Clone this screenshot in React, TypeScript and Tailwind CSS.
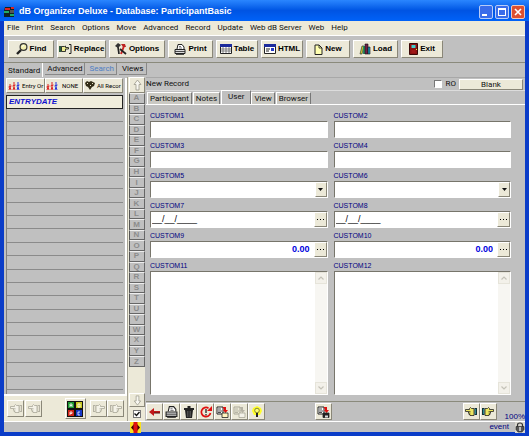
import React from "react";

const raised =
  "border border-t-white border-l-white border-r-[#8a8778] border-b-[#8a8778] bg-[#ece9d8]";
const sunken =
  "border border-t-[#77756b] border-l-[#77756b] border-r-white border-b-white bg-white";

type IconProps = { className?: string };

const AppIcon = () => (
  <svg viewBox="0 0 11 12" className="w-[11px] h-3">
    <path d="M1 1h9v10H0V5z" fill="#122" />
    <path d="M1 2h5v2H1zM7 1h3v2H7z" fill="#d22" />
    <path d="M0 5h5v2H0zM6 8h4v2H6z" fill="#2a6" />
    <path d="M6 4h4v3H6z" fill="#555" />
  </svg>
);

const FindIcon = () => (
  <svg viewBox="0 0 12 12" className="w-3 h-3">
    <path d="M1 11 5 7" stroke="#222" strokeWidth="2.400" />
    <circle cx="7.5" cy="4" r="3.4" fill="#f3efb0" stroke="#333" strokeWidth="1.200" />
    <path d="M6 3.500q1-1 2-1" stroke="#fff" fill="none" />
  </svg>
);

const ReplaceIcon = () => (
  <svg viewBox="0 0 13 10" className="w-[13px] h-[10px]">
    <path d="M0 2h2.500v6H0z" fill="#2c5c40" />
    <path d="M2.500 2.500h3l1-.5v1.500h3V5h-3v2.500h-4z" fill="#eeee90" stroke="#222" strokeWidth=".9" />
    <path d="M10 .5h2v9h-2" fill="none" stroke="#222" />
  </svg>
);

const OptionsIcon = () => (
  <svg viewBox="0 0 12 12" className="w-3 h-3">
    <path d="M3 4l1 7" stroke="#222" strokeWidth="1.700" />
    <path d="M0 3l3-3 3 2-3 3z" fill="#333" />
    <path d="M9 3 6 11" stroke="#c22" strokeWidth="2" />
    <path d="M6 1h4l1 3H8z" fill="#b22" />
    <path d="M5 6l6 5" stroke="#222" strokeWidth="1.700" />
  </svg>
);

const PrintIcon = ({ className = "w-3 h-[11px]" }: IconProps) => (
  <svg viewBox="0 0 12 11" className={className}>
    <path d="M3 5 4 .5h4L10 3v2" fill="#fff" stroke="#222" />
    <path d="M5 2.500h2M5 4h3" stroke="#444" strokeWidth=".7" />
    <path d="M1 5.500h10v4H1z" fill="#ddd" stroke="#222" />
    <path d="M1 7.500h10M2 10.500h8" stroke="#222" strokeWidth=".8" />
  </svg>
);

const TableIcon = () => (
  <svg viewBox="0 0 12 10" className="w-3 h-[10px]">
    <path d="M.5.5h11v9H.5z" fill="#fff" stroke="#222" />
    <path d="M0 0h12v3H0z" fill="#1c2b9c" />
    <path d="M1 5h10M1 7h10M3 3v6M6 3v6M9 3v6" stroke="#555" strokeWidth=".7" />
  </svg>
);

const HtmlIcon = () => (
  <svg viewBox="0 0 12 10" className="w-3 h-[10px]">
    <path d="M.5.5h11v9H.5z" fill="#fff" stroke="#222" />
    <path d="M0 0h12v3H0z" fill="#1c2b9c" />
    <path d="M2 5h4M2 7h3" stroke="#222" />
    <path d="M7 4h3v3H7z" fill="#2438c8" />
  </svg>
);

const NewIcon = () => (
  <svg viewBox="0 0 9 11" className="w-[9px] h-[11px]">
    <path d="M1 1h4l3 3v6.500H1z" fill="#ffffb0" stroke="#222" />
    <path d="M5 1v3h3" fill="none" stroke="#222" strokeWidth=".8" />
  </svg>
);

const LoadIcon = () => (
  <svg viewBox="0 0 12 12" className="w-3 h-3">
    <path d="M1 11 3 3h2L3 11z" fill="#cc3" stroke="#222" strokeWidth=".6" />
    <path d="M4 3h2v8H4z" fill="#2a8a60" />
    <path d="M6 1h3v10H6z" fill="#712048" stroke="#111" strokeWidth=".6" />
    <path d="M9 4h2v7H9z" fill="#18a0c0" stroke="#111" strokeWidth=".6" />
  </svg>
);

const ExitIcon = () => (
  <svg viewBox="0 0 9 12" className="w-[9px] h-3">
    <path d="M.5.5h8v11h-8z" fill="#8c1212" stroke="#3a0808" />
    <path d="M2.500 2h4v3h-4z" fill="#4cc" />
    <path d="M2.500 7h4v3h-4z" fill="#a01818" />
    <path d="M7 6h1v1H7z" fill="#ee4" />
  </svg>
);

const PeopleIcon = () => (
  <svg viewBox="0 0 12 8" className="w-3 h-2 shrink-0">
    <g strokeWidth="1" fill="none">
      <path d="M2 3v2L1 8M2 5l1 3M.5 5l3-1" stroke="#d22" />
      <path d="M6 1v4L5 8M6 5l1 3M4.500 4l3-1" stroke="#d22" />
      <path d="M10 1v4L9 8M10 5l1 3M8.500 4l3-1" stroke="#23d" />
    </g>
    <path d="M1.500 2h1v1h-1zM5.500 0h1v1h-1z" fill="#d22" />
    <path d="M9.500 0h1v1h-1z" fill="#23d" />
  </svg>
);

const CrowdIcon = () => (
  <svg viewBox="0 0 10 9" className="w-[10px] h-[9px] shrink-0">
    <path d="M0 2l2-2 2 1 2-1 2 1 2 1-1 3-2 1-2 3-2-3-2-1z" fill="#332c18" />
    <path d="M2 2h1v1H2zM7 2h1v1H7zM5 4h1v1H5z" fill="#e8e4c8" />
  </svg>
);

const HandIcon = ({ left, color }: { left?: boolean; color?: boolean }) => (
  <svg viewBox="0 0 12 9" className={left ? "w-3 h-[9px] -scale-x-100" : "w-3 h-[9px]"}>
    <path
      d="M3 1.500h2.500l1-1 1 1v1h4v2H8.500v1.500H8v1.500H7v1H3z"
      fill={color ? "#ece660" : "#f4f2e8"}
      stroke={color ? "#222" : "#aaa798"}
      strokeWidth=".8"
    />
    <path d="M6.500 4.500h2M6.500 6H8" stroke={color ? "#222" : "#aaa798"} strokeWidth=".6" />
    <path d="M0 1h2.500v7H0z" fill={color ? "#123038" : "#b5b2a4"} />
    <path d="M1 2h1v5H1z" fill={color ? "#2a8a90" : "#e4e1d2"} />
  </svg>
);

const BlocksIcon = () => (
  <svg viewBox="0 0 16 16" className="w-4 h-4">
    <path d="M0 0h16v16H0z" fill="#111" />
    <path d="M1 1h6v6H1z" fill="#1b9a30" />
    <path d="M9 1h6v6H9z" fill="#c8c820" />
    <path d="M1 9h6v6H1z" fill="#d02418" />
    <path d="M9 9h6v6H9z" fill="#1838c8" />
    <path d="M3 6V3h2v3M3 4.500h2M11 3h2v3h-2zM3 14v-3h2v1.500H3M13 11h-2v3h2" fill="none" stroke="#fff" strokeWidth=".8" />
  </svg>
);

const ArrowIcon = ({ down }: { down?: boolean }) => (
  <svg viewBox="0 0 9 12" className={down ? "w-[9px] h-[11px] rotate-180" : "w-[9px] h-3"}>
    <path d="M4.500 1 8 5.500H6V11H3V5.500H1z" fill="#f8f7f0" stroke="#9a988c" strokeWidth=".8" />
  </svg>
);

const BackIcon = () => (
  <svg viewBox="0 0 12 8" className="w-3 h-2">
    <path d="M0 4 5 0v3h6v2H5v3z" fill="#c01818" />
    <path d="M5 5h6" stroke="#501010" />
  </svg>
);

const TrashIcon = () => (
  <svg viewBox="0 0 10 12" className="w-[10px] h-3">
    <path d="M0 2h10v2H0zM3.500 0h3v2h-3zM1 4h8l-1 8H2z" fill="#222" />
    <path d="M3.500 5v6M5 5v6M6.500 5v6" stroke="#777" strokeWidth=".5" />
  </svg>
);

const UndoIcon = () => (
  <svg viewBox="0 0 12 12" className="w-3 h-3">
    <path d="M8.500 2.200a4.600 4.600 0 1 0 2 4.800" fill="none" stroke="#e01010" strokeWidth="1.700" />
    <path d="M7 5h5V0z" fill="#e01010" />
    <path d="M6 3v4M6 8v1.500" stroke="#222" strokeWidth="1.300" />
  </svg>
);

const CopyIcon = ({ off, disk }: { off?: boolean; disk?: boolean }) => {
  const ink = off ? "#aaa798" : "#222";
  return (
    <svg viewBox="0 0 13 12" className="w-[13px] h-3">
      <path d="M1 1h6v7H1z" fill={off ? "#ece9d8" : "#fff"} stroke={ink} />
      <path d="M2 3h3M2 5h4M2 6.500h3" stroke={ink} strokeWidth=".8" />
      <path d="M7 1h3v3h2L9.500 7 7 4h1V2.500H7z" fill={off ? "#b5b2a4" : "#e01010"} />
      <path d="M6 7h6v4.500H6z" fill={disk ? "#222" : off ? "#f4f2e8" : "#fff4c0"} stroke={ink} strokeWidth=".8" />
      {disk && <path d="M8 9.500h3v2H8z" fill="#ddd" />}
    </svg>
  );
};

const BulbIcon = () => (
  <svg viewBox="0 0 10 12" className="w-[10px] h-3">
    <path d="M5 0l4 2 1 3-2 4H2L0 5l1-3z" fill="#ffff28" />
    <circle cx="5" cy="4.500" r="2.300" fill="#ffff70" stroke="#663" strokeWidth=".8" />
    <path d="M4 7h2v4H4z" fill="#222" />
  </svg>
);

const SplitIcon = () => (
  <svg viewBox="0 0 11 11" className="w-[11px] h-[11px]">
    <path d="M0 0h11v11H0z" fill="#f8e020" />
    <path d="M4 2 1 5.500 4 9zM7 2l3 3.500L7 9z" fill="#400" />
    <path d="M3.500 0h4v11h-4z" fill="#e01010" />
  </svg>
);

const LockIcon = () => (
  <svg viewBox="0 0 10 11" className="w-[10px] h-[11px]">
    <path d="M0 0h10v11H0z" fill="#d8d6ce" />
    <path d="M2.500 5V3a2.500 2 0 0 1 5 0v2" fill="none" stroke="#333" strokeWidth="1.200" />
    <path d="M1 4.500h8v3L7 10H3L1 7.500z" fill="#555" stroke="#222" strokeWidth=".6" />
    <path d="M5 5v4" stroke="#fff" strokeWidth="1.200" />
  </svg>
);

const menus = ["File", "Print", "Search", "Options", "Move", "Advanced", "Record", "Update", "Web dB Server", "Web", "Help"];

const tools = [
  { name: "Find", icon: <FindIcon />, width: "w-[46px]" },
  { name: "Replace", icon: <ReplaceIcon />, width: "w-[49px]" },
  { name: "Options", icon: <OptionsIcon />, width: "w-[56px]" },
  { name: "Print", icon: <PrintIcon />, width: "w-[45px]" },
  { name: "Table", icon: <TableIcon />, width: "w-[42px]" },
  { name: "HTML", icon: <HtmlIcon />, width: "w-[42px]" },
  { name: "New", icon: <NewIcon />, width: "w-[44px]" },
  { name: "Load", icon: <LoadIcon />, width: "w-[45px]" },
  { name: "Exit", icon: <ExitIcon />, width: "w-[42px]" },
];

const letters = "ABCDEFGHIJKLMNOPQRSTUVWXYZ".split("");

const fields = [
  { name: "CUSTOM1", kind: "text" },
  { name: "CUSTOM2", kind: "text" },
  { name: "CUSTOM3", kind: "text" },
  { name: "CUSTOM4", kind: "text" },
  { name: "CUSTOM5", kind: "select" },
  { name: "CUSTOM6", kind: "select" },
  { name: "CUSTOM7", kind: "date" },
  { name: "CUSTOM8", kind: "date" },
  { name: "CUSTOM9", kind: "number" },
  { name: "CUSTOM10", kind: "number" },
  { name: "CUSTOM11", kind: "memo" },
  { name: "CUSTOM12", kind: "memo" },
];

const Field = ({ name, kind }: { name: string; kind: string }) => (
  <div className="flex flex-col min-w-0">
    <label htmlFor={name} className="h-[11px] leading-[11px] text-[7px] text-[#000080]">
      {name}
    </label>
    {kind === "text" && <input id={name} type="text" className={`h-[17px] w-full px-px text-[9px] ${sunken}`} />}
    {kind === "select" && (
      <div className={`relative h-[17px] ${sunken}`}>
        <select id={name} className="block w-full h-full appearance-none text-[9px]" />
        <span className={`absolute right-0 inset-y-0 w-3 flex items-center justify-center pointer-events-none ${raised}`}>
          <svg viewBox="0 0 5 3" className="w-[5px] h-[3px]">
            <path d="M0 0h5L2.500 3z" fill="#111" />
          </svg>
        </span>
      </div>
    )}
    {(kind === "date" || kind === "number") && (
      <div className={`flex h-[17px] ${sunken}`}>
        <input
          id={name}
          type="text"
          defaultValue={kind === "date" ? "__/__/____" : "0.00"}
          className={
            kind === "date"
              ? "flex-1 min-w-0 px-px text-[9px] text-black"
              : "flex-1 min-w-0 pr-1 text-[9px] font-bold text-right text-[#0000e0]"
          }
        />
        <button aria-label={`Pick ${name}`} className={`w-[13px] flex items-center justify-center gap-px ${raised}`}>
          <span className="w-px h-px bg-black" />
          <span className="w-px h-px mx-px bg-black" />
          <span className="w-px h-px bg-black" />
        </button>
      </div>
    )}
    {kind === "memo" && (
      <div className={`flex flex-1 min-h-0 ${sunken}`}>
        <textarea id={name} className="flex-1 min-w-0 resize-none text-[9px]" />
        <div className="w-3 flex flex-col justify-between bg-[#f7f6f2]">
          {["up", "down"].map((dir) => (
            <button key={dir} aria-label={`Scroll ${dir}`} className="h-3 flex items-center justify-center border border-[#e6e4da] bg-[#f3f1ea]">
              <svg viewBox="0 0 6 4" className={dir === "up" ? "w-[6px] h-1" : "w-[6px] h-1 rotate-180"}>
                <path d="M.5 3.500 3 1l2.500 2.500" fill="none" stroke="#c4c2b8" strokeWidth="1.200" />
              </svg>
            </button>
          ))}
        </div>
      </div>
    )}
  </div>
);

const SmallButton = ({ label, children }: { label: string; children: React.ReactNode }) => (
  <button aria-label={label} className={`w-[17px] h-[17px] shrink-0 flex items-center justify-center ${raised}`}>
    {children}
  </button>
);

const TitleBar = () => (
  <header className="h-[21px] shrink-0 flex items-center pl-1 pr-1 pt-[2px] bg-linear-to-b from-[#2a86ff] via-[#0054e3] to-[#0062f8]">
    <AppIcon />
    <h1 className="ml-1 flex-1 text-[9px] font-bold text-white whitespace-nowrap">
      dB Organizer Deluxe - Database: ParticipantBasic
    </h1>
    <div className="flex gap-[2px]">
      <button aria-label="Minimize" className="w-[14px] h-[14px] rounded-xs border border-[#b8ccf8] bg-[#3a6cea] flex items-end p-[2px]">
        <span className="w-[5px] h-[2px] bg-white" />
      </button>
      <button aria-label="Maximize" className="w-[14px] h-[14px] rounded-xs border border-[#b8ccf8] bg-[#3a6cea] flex items-center justify-center">
        <span className="w-2 h-2 border border-t-2 border-white" />
      </button>
      <button aria-label="Close" className="w-[14px] h-[14px] rounded-xs border border-[#f0c8bc] bg-[#dc5030] flex items-center justify-center">
        <svg viewBox="0 0 8 8" className="w-2 h-2">
          <path d="M1 1l6 6M7 1 1 7" stroke="#fff" strokeWidth="1.600" />
        </svg>
      </button>
    </div>
  </header>
);

const Sidebar = () => (
  <aside className="w-[123px] shrink-0 flex flex-col pt-px">
    <div className="flex-1 min-h-0 flex flex-col px-[2px] border-r-2 border-b-2 border-white">
      <div className="grid grid-cols-[39px_38px_1fr] h-[15px] shrink-0 font-['Roboto',sans-serif] text-[6px] text-black">
        <button className={`flex items-center gap-[2px] pl-px whitespace-nowrap ${raised}`}>
          <PeopleIcon /> Entry Or
        </button>
        <button className={`flex items-center gap-1 whitespace-nowrap ${raised}`}>
          <PeopleIcon /> NONE
        </button>
        <button className={`flex items-center gap-[2px] pl-px whitespace-nowrap ${raised}`}>
          <CrowdIcon /> All Recor
        </button>
      </div>
      <div className="h-[14px] shrink-0 mt-[2px] px-[2px] leading-3 border border-[#222] bg-[#f0eddc] text-[8px] font-bold italic text-[#1010d0]">
        ENTRYDATE
      </div>
      <div className="flex-1 flex flex-col pb-1 border-l border-[#808080]">
        {Array.from({ length: 21 }, (_, i) => (
          <div key={i} className="flex-1 border-b border-[#8a8a8a]" />
        ))}
      </div>
    </div>
    <div className="h-[25px] shrink-0 flex items-center justify-between px-[3px] bg-[#ece9d8]">
      <div className="flex gap-px">
        <SmallButton label="First"><HandIcon left /></SmallButton>
        <SmallButton label="Previous"><HandIcon left /></SmallButton>
      </div>
      <button aria-label="Overview" className={`w-[21px] h-[21px] ml-[18px] flex items-center justify-center ${raised}`}>
        <BlocksIcon />
      </button>
      <div className="flex">
        <SmallButton label="Next"><HandIcon /></SmallButton>
        <SmallButton label="Last"><HandIcon /></SmallButton>
      </div>
    </div>
  </aside>
);

const LetterBar = () => (
  <nav aria-label="Letters" className="w-[18px] shrink-0 flex flex-col pl-px bg-[#ece9d8] border-l border-[#a5a294]">
    <button aria-label="Up" className={`h-4 shrink-0 flex items-center justify-center ${raised}`}>
      <ArrowIcon />
    </button>
    <div className="flex-1 flex flex-col">
      {letters.map((l) => (
        <button
          key={l}
          className="flex-1 min-h-0 leading-2 pr-px text-[8px] font-bold text-[#8c8c8c] bg-[#c0c0c0] border border-t-[#eee] border-l-[#555] border-r-[#666] border-b-[#666]"
        >
          {l}
        </button>
      ))}
    </div>
    <div className="h-[26px] shrink-0" />
    <button aria-label="Down" className={`h-[14px] shrink-0 flex items-center justify-center ${raised}`}>
      <ArrowIcon down />
    </button>
    <label className="h-[14px] shrink-0 relative flex items-center justify-center">
      <input type="checkbox" defaultChecked aria-label="Letters on" className="appearance-none w-2 h-2 bg-white border border-[#777]" />
      <svg viewBox="0 0 6 6" className="absolute w-[6px] h-[6px] pointer-events-none">
        <path d="M.5 2.500 2.500 4.500 5.500 1" fill="none" stroke="#111" strokeWidth="1.400" />
      </svg>
    </label>
  </nav>
);

const RecordTabs = () => (
  <div role="tablist" className="flex items-end h-[14px] shrink-0 pl-px border-b border-white font-['Roboto',sans-serif] text-[8px]">
    {["Participant", "Notes", "User", "View", "Browser"].map((t) => (
      <button
        key={t}
        role="tab"
        aria-selected={t === "User"}
        className={
          t === "User"
            ? "h-[14px] px-[6px] pb-[2px] leading-[11px] border-t border-l border-r border-t-white border-l-white border-r-[#777] bg-[#c0c0c0]"
            : "h-3 px-[2px] mr-px leading-[11px] border-t border-l border-r border-t-white border-l-white border-r-[#777] bg-[#cac9c3]"
        }
      >
        {t}
      </button>
    ))}
  </div>
);

const Record = () => (
  <main className="flex-1 min-w-0 flex flex-col pl-px">
    <div className="h-[14px] shrink-0 flex items-center border-t border-b border-t-[#a8a8a8] border-b-[#dcdcdc] font-['Roboto',sans-serif] text-[8px]">
      <span className="flex-1">New Record</span>
      <label className="flex items-center gap-1">
        <input type="checkbox" className="appearance-none w-2 h-2 bg-white border border-t-[#777] border-l-[#777] border-white" />
        RO
      </label>
      <button className={`ml-[3px] mr-[2px] w-16 h-[11px] leading-[10px] ${raised}`}>Blank</button>
    </div>
    <RecordTabs />
    <form className="flex-1 min-h-0 grid grid-cols-2 grid-rows-[28px_28px_28px_28px_28px_1fr] gap-x-[6px] gap-y-[2px] pl-1 pr-[14px] pt-[5px] pb-[6px]">
      {fields.map((f) => (
        <Field key={f.name} {...f} />
      ))}
    </form>
    <div className="h-5 shrink-0 flex items-center border-t border-[#8a8a7c]">
      <SmallButton label="Back"><BackIcon /></SmallButton>
      <SmallButton label="Print record"><PrintIcon className="w-[13px] h-3" /></SmallButton>
      <SmallButton label="Delete"><TrashIcon /></SmallButton>
      <SmallButton label="Undo"><UndoIcon /></SmallButton>
      <SmallButton label="Copy"><CopyIcon /></SmallButton>
      <SmallButton label="Paste"><CopyIcon off /></SmallButton>
      <SmallButton label="Tip"><BulbIcon /></SmallButton>
      <div className="flex-[51]" />
      <SmallButton label="Save"><CopyIcon disk /></SmallButton>
      <div className="flex-[132]" />
      <SmallButton label="Previous record"><HandIcon left color /></SmallButton>
      <SmallButton label="Next record"><HandIcon color /></SmallButton>
      <span className="ml-2 self-end leading-[9px] text-[8px] text-[#000080]">100%</span>
    </div>
  </main>
);

export default function App() {
  return (
    <div className="min-h-screen flex flex-col bg-[#0a3cc8] font-['Liberation_Sans',sans-serif] text-[#111]">
      <TitleBar />
      <div className="flex-1 flex flex-col mx-1 mb-1 bg-[#c0c0c0]">
        <nav className="h-[14px] shrink-0 flex items-center gap-[7px] pl-[3px] bg-[#ece9d8] font-['Roboto',sans-serif] text-[8px] whitespace-nowrap">
          {menus.map((m) => (
            <button key={m}>{m}</button>
          ))}
        </nav>
        <div className="h-[28px] shrink-0 flex items-center gap-[3px] pl-1 border-t border-b border-t-white border-b-[#8a8a7c]">
          {tools.map((t) => (
            <button key={t.name} className={`h-[18px] flex items-center justify-center gap-[2px] text-[8px] font-bold text-black ${t.width} ${raised}`}>
              {t.icon}
              {t.name}
            </button>
          ))}
        </div>
        <div role="tablist" className="h-[14px] shrink-0 flex items-start gap-[2px] pl-[2px] font-['Roboto',sans-serif] text-[8px]">
          <button role="tab" aria-selected="true" className="h-[14px] pt-[2px] px-[2px] border-r border-white">Standard</button>
          <button role="tab" className="h-3 leading-[11px] px-[2px] border-r border-b border-[#888]">Advanced</button>
          <button role="tab" className="h-3 leading-[11px] px-[2px] border-r border-b border-[#888] text-[#4f7fc4]">Search</button>
          <button role="tab" className="h-3 leading-[11px] px-[3px] border-r border-b border-[#888]">Views</button>
        </div>
        <div className="flex-1 flex">
          <Sidebar />
          <LetterBar />
          <Record />
        </div>
        <footer className="h-[11px] shrink-0 flex items-center border-t border-white text-[8px] text-[#000080]">
          <span className="ml-[126px] flex-1"><SplitIcon /></span>
          <span className="mr-[6px]">event</span>
          <LockIcon />
        </footer>
      </div>
    </div>
  );
}
